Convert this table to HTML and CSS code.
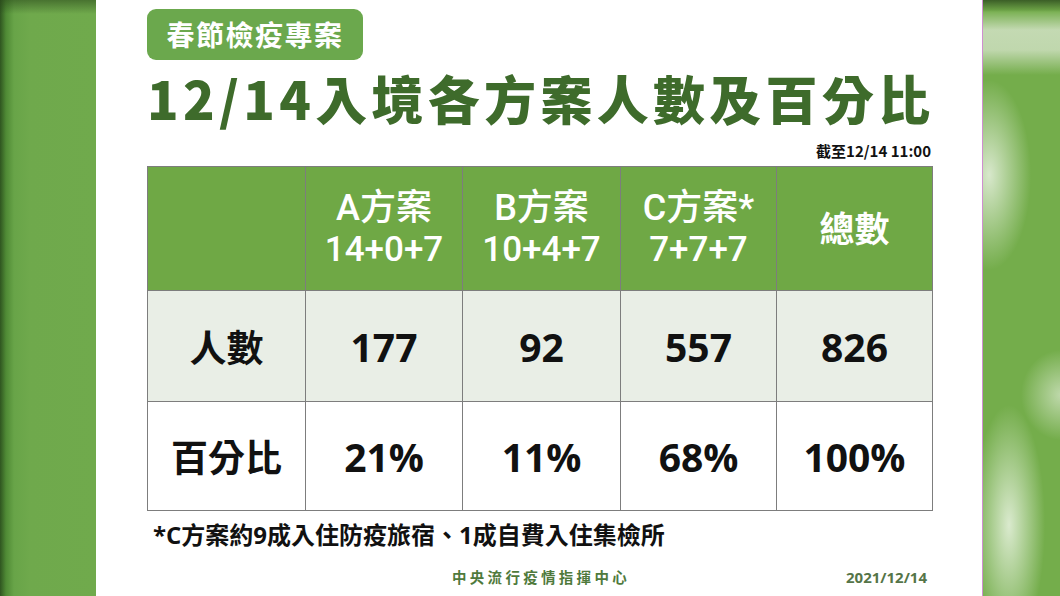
FILE: index.html
```html
<!DOCTYPE html>
<html lang="zh-Hant">
<head>
<meta charset="utf-8">
<title>春節檢疫專案</title>
<link rel="stylesheet" href="styles.css">
</head>
<body>
<div class="page">
  <div class="side-left"></div>
  <main class="main">
    <div class="badge">春節檢疫專案</div>
    <h1 class="title">12/14入境各方案人數及百分比</h1>
    <div class="asof">截至12/14 11:00</div>
    <table class="data">
      <colgroup>
        <col class="c1"><col class="c2"><col class="c3"><col class="c4"><col class="c5">
      </colgroup>
      <tr class="head">
        <th></th>
        <th><span class="l1">A方案</span><span class="l2">14+0+7</span></th>
        <th><span class="l1">B方案</span><span class="l2">10+4+7</span></th>
        <th><span class="l1">C方案*</span><span class="l2">7+7+7</span></th>
        <th><span class="tot">總數</span></th>
      </tr>
      <tr class="r-count">
        <td class="label">人數</td>
        <td>177</td><td>92</td><td>557</td><td>826</td>
      </tr>
      <tr class="r-pct">
        <td class="label">百分比</td>
        <td>21%</td><td>11%</td><td>68%</td><td>100%</td>
      </tr>
    </table>
    <p class="note">*C方案約9成入住防疫旅宿、1成自費入住集檢所</p>
    <div class="footer">
      <span class="org">中央流行疫情指揮中心</span>
      <span class="date">2021/12/14</span>
    </div>
  </main>
  <div class="side-right"></div>
</div>
</body>
</html>
```

FILE: styles.css
```css
html, body {
  margin: 0;
  padding: 0;
  width: 1060px;
  height: 596px;
  overflow: hidden;
  background: #fff;
}

.page {
  display: flex;
  width: 1060px;
  height: 596px;
  font-family: "Open Sans", "Noto Sans CJK TC", sans-serif;
}

.side-left {
  width: 96px;
  flex: none;
  background:
    linear-gradient(to bottom, rgba(40,70,25,0.55) 0, rgba(40,70,25,0) 14px),
    linear-gradient(to right, #2f5520 0, #4f8a35 6px, #68a448 14px, #6fa94c 30px, #70aa4c 96px);
}

.side-right {
  width: 77px;
  flex: none;
  border-left: 1px solid #cf8fd0;
  background:
    linear-gradient(to bottom, rgba(45,75,30,0.8) 0, rgba(45,75,30,0) 12px),
    linear-gradient(to bottom, rgba(200,220,184,0) 10px, rgba(200,220,184,0.95) 30px, rgba(200,220,184,0.9) 50px, rgba(200,220,184,0) 75px),
    radial-gradient(ellipse 42px 95px at 6px 175px, rgba(216,232,204,1), rgba(216,232,204,0.5) 50%, rgba(216,232,204,0) 100%),
    radial-gradient(ellipse 36px 120px at 26px 525px, rgba(218,234,206,1), rgba(218,234,206,0.5) 50%, rgba(218,234,206,0) 100%),
    radial-gradient(ellipse 40px 45px at 78px 395px, rgba(210,228,196,0.8), rgba(210,228,196,0) 100%),
    #74ad4b;
}

.main {
  flex: 1;
  display: flex;
  flex-direction: column;
  padding: 9px 51px 0 51px;
  min-width: 0;
}

.badge {
  align-self: flex-start;
  width: 216px;
  height: 51px;
  box-sizing: border-box;
  background: #6ba84d;
  border-radius: 9px;
  color: #fff;
  font-family: "Noto Sans CJK TC", sans-serif;
  font-weight: 700;
  font-size: 28px;
  line-height: 51px;
  text-align: center;
  letter-spacing: 1.5px;
}

.title {
  margin: 7px 0 0 0;
  font-family: "Noto Sans CJK TC", sans-serif;
  font-weight: 900;
  font-size: 52px;
  line-height: 62px;
  letter-spacing: 4.3px;
  color: #3e6b2b;
  white-space: nowrap;
}

.asof {
  align-self: flex-end;
  margin-top: 13px;
  font-family: "Noto Sans CJK TC", sans-serif;
  font-weight: 700;
  font-size: 15px;
  line-height: 18px;
  color: #111;
}

.data {
  margin-top: 6px;
  width: 785px;
  border-collapse: collapse;
  table-layout: fixed;
}
.data .c1 { width: 158px; }
.data .c2 { width: 157px; }
.data .c3 { width: 158px; }
.data .c4 { width: 156px; }
.data .c5 { width: 156px; }

.data th, .data td {
  border: 1px solid #7d7d7d;
  text-align: center;
  vertical-align: middle;
  padding: 0;
}

.data .head th {
  height: 123px;
  background: #6fa845;
  color: #fff;
  font-family: Roboto, "Noto Sans CJK TC", sans-serif;
  font-weight: 500;
  font-size: 35px;
  line-height: 42px;
}
.data .head th .l1, .data .head th .l2 { display: block; }
.data .head th .l1 { font-size: 36px; }
.data .head th .tot {
  font-family: "Noto Sans CJK TC", sans-serif;
  font-weight: 700;
  font-size: 35px;
}

.data td {
  color: #111;
  font-family: "Open Sans", "Noto Sans CJK TC", sans-serif;
  font-weight: 700;
  font-size: 39px;
}
.data td.label {
  font-family: "Noto Sans CJK TC", sans-serif;
  font-size: 37px;
}
.r-count td { height: 110px; background: #e9eee6; }
.r-pct td { height: 108px; background: #fff; }

.note {
  margin: 8px 0 0 6px;
  font-family: "Open Sans", "Noto Sans CJK TC", sans-serif;
  font-weight: 700;
  font-size: 24px;
  line-height: 32px;
  color: #111;
}

.footer {
  display: flex;
  margin-top: 16px;
  align-items: center;
  font-family: "Noto Sans CJK TC", sans-serif;
  font-weight: 700;
  font-size: 14.5px;
  line-height: 20px;
  color: #4f7a3c;
}
.footer .org {
  margin-left: 305px;
  letter-spacing: 3.3px;
}
.footer .date {
  margin-left: auto;
  margin-right: 4px;
  font-family: "Open Sans", sans-serif;
  font-size: 15px;
  color: #557548;
}
```
